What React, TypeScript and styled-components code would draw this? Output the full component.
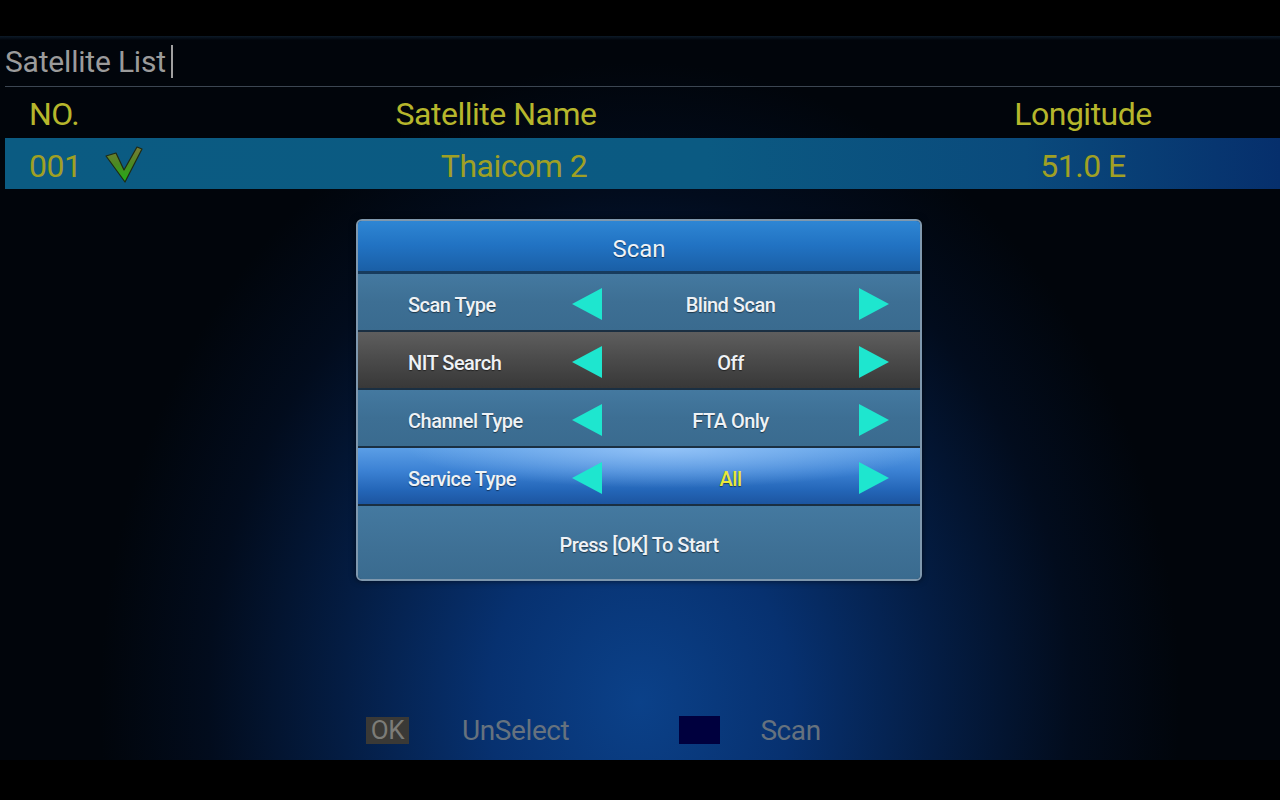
import React from "react";
import styled, { createGlobalStyle } from "styled-components";

const GlobalStyle = createGlobalStyle`
  html, body {
    margin: 0;
    padding: 0;
    background: #000;
  }
  * {
    box-sizing: border-box;
  }
`;

const Screen = styled.div`
  width: 1280px;
  height: 800px;
  display: flex;
  flex-direction: column;
  background: #000;
  font-family: Roboto, "Liberation Sans", sans-serif;
  overflow: hidden;
`;

const Letterbox = styled.div<{ $h: number }>`
  height: ${(p) => p.$h}px;
  flex: none;
  background: #000;
`;

const Stage = styled.div`
  position: relative;
  flex: 1;
  display: flex;
  flex-direction: column;
  background:
    linear-gradient(180deg, rgba(20, 40, 60, 0.6) 0px, rgba(0, 0, 0, 0) 4px),
    radial-gradient(
      ellipse 540px 640px at 50% 92%,
      #0b4189 0%,
      #073170 28%,
      #041d44 55%,
      #020c1d 80%,
      #01050b 100%
    );
  background-color: #01050b;
`;

const TitleRow = styled.div`
  height: 51px;
  margin-left: 5px;
  display: flex;
  align-items: center;
  border-bottom: 1px solid #3c4652;
  color: #9b9b9b;
  font-size: 30px;
  letter-spacing: -0.2px;
  padding-top: 1px;
`;

const Cursor = styled.span`
  width: 2px;
  height: 33px;
  margin-left: 5px;
  background: #a0a0a0;
`;

const ListRow = styled.div<{ $selected?: boolean }>`
  height: 51px;
  margin-left: 5px;
  display: grid;
  grid-template-columns: 195px 592px 94px 1fr;
  align-items: center;
  font-size: 32px;
  letter-spacing: -0.5px;
  padding-top: ${(p) => (p.$selected ? 4 : 3)}px;
  color: ${(p) => (p.$selected ? "#a0a024" : "#b6b62c")};
  background: ${(p) =>
    p.$selected
      ? "linear-gradient(90deg, #0b5b82 0%, #0b5a82 55%, #0a4a7c 80%, #062f6c 100%)"
      : "transparent"};
`;

const Cell = styled.div<{ $align?: "left" | "center"; $shift?: number }>`
  display: flex;
  align-items: center;
  justify-content: ${(p) => (p.$align === "left" ? "flex-start" : "center")};
  padding-left: ${(p) => (p.$align === "left" ? 24 : p.$shift ?? 0)}px;
  gap: 24px;
  white-space: nowrap;
`;

const Check = () => (
  <svg width="38" height="38" viewBox="0 0 38 38" style={{ marginTop: -4 }}>
    <defs>
      <linearGradient id="chk" x1="0" y1="0" x2="0" y2="1">
        <stop offset="0" stopColor="#7a7a36" />
        <stop offset="0.5" stopColor="#4a8a22" />
        <stop offset="1" stopColor="#1fb016" />
      </linearGradient>
    </defs>
    <path
      d="M1 11 L11 8 L19 25 L32 2 L37 4 L20 37 Z"
      fill="url(#chk)"
      stroke="#202a14"
      strokeWidth="1.2"
      strokeLinejoin="round"
    />
  </svg>
);

const Dialog = styled.div`
  position: absolute;
  left: 356px;
  top: 183px;
  width: 566px;
  height: 362px;
  display: flex;
  flex-direction: column;
  border: 2px solid #7f98ae;
  border-radius: 6px;
  background: #1d3a52;
  overflow: hidden;
  box-shadow: 0 0 6px rgba(0, 0, 0, 0.6);
  color: #eef2f6;
  text-shadow: 0 1px 1px rgba(0, 0, 0, 0.5);
`;

const DialogHeader = styled.div`
  height: 53px;
  flex: none;
  display: flex;
  align-items: center;
  justify-content: center;
  padding-top: 6px;
  font-size: 24px;
  background: linear-gradient(180deg, #2e86d4 0%, #2172c2 50%, #1a5fa6 100%);
  border-bottom: 3px solid #173c5e;
`;

type Tone = "normal" | "muted" | "active";

const rowBackground: Record<Tone, string> = {
  normal: "linear-gradient(180deg, #4479a0 0%, #3d6f94 50%, #3a6b8f 100%)",
  muted: "linear-gradient(180deg, #5e5e5e 0%, #4a4a4a 50%, #383838 100%)",
  active:
    "radial-gradient(ellipse 260px 40px at 55% 0%, rgba(170, 210, 255, 0.7) 0%, rgba(170, 210, 255, 0) 100%), linear-gradient(180deg, #5b9ee6 0%, #3c82d4 40%, #2466b8 75%, #1c55a0 100%)",
};

const OptionRow = styled.div<{ $tone: Tone }>`
  height: 58px;
  flex: none;
  display: grid;
  grid-template-columns: 50px 163px 32px 255px 32px 1fr;
  align-items: center;
  font-size: 20px;
  font-weight: 500;
  letter-spacing: -0.5px;
  background: ${(p) => rowBackground[p.$tone]};
  border-bottom: 2px solid #1a2f42;
`;

const OptionLabel = styled.div`
  grid-column: 2;
  white-space: nowrap;
  padding-top: 6px;
`;

const OptionValue = styled.div<{ $highlight?: boolean }>`
  text-align: center;
  padding-top: 6px;
  color: ${(p) => (p.$highlight ? "#e9e93a" : "#eef2f6")};
`;

const Arrow = ({ dir }: { dir: "left" | "right" }) => (
  <svg width="32" height="34" viewBox="0 0 32 34" style={{ marginTop: 4 }}>
    <polygon
      points={dir === "left" ? "31,1 31,33 1,17" : "1,1 1,33 31,17"}
      fill="#1ee6cf"
    />
  </svg>
);

const StartRow = styled.div`
  flex: 1;
  display: flex;
  align-items: center;
  justify-content: center;
  font-size: 20px;
  font-weight: 500;
  letter-spacing: -0.5px;
  padding-top: 4px;
  background: linear-gradient(180deg, #4479a0 0%, #3e7095 60%, #3a6b8f 100%);
`;

const Footer = styled.div`
  margin-top: auto;
  height: 60px;
  display: flex;
  align-items: center;
  padding-left: 366px;
  font-size: 28px;
  letter-spacing: -0.4px;
`;

const KeyBox = styled.div<{ $color: string; $w: number; $h: number }>`
  width: ${(p) => p.$w}px;
  height: ${(p) => p.$h}px;
  display: flex;
  align-items: center;
  justify-content: center;
  background: ${(p) => p.$color};
  color: #7c7c78;
  font-size: 26px;
`;

const KeyLabel = styled.div<{ $gap: number; $after: number }>`
  margin-left: ${(p) => p.$gap}px;
  margin-right: ${(p) => p.$after}px;
  color: #66727e;
`;

const options: { label: string; value: string; tone: Tone }[] = [
  { label: "Scan Type", value: "Blind Scan", tone: "normal" },
  { label: "NIT Search", value: "Off", tone: "muted" },
  { label: "Channel Type", value: "FTA Only", tone: "normal" },
  { label: "Service Type", value: "All", tone: "active" },
];

export default function App() {
  return (
    <>
      <GlobalStyle />
      <Screen>
        <Letterbox $h={36} />
        <Stage>
          <TitleRow>
            Satellite List
            <Cursor />
          </TitleRow>

          <ListRow>
            <Cell $align="left">NO.</Cell>
            <Cell>Satellite Name</Cell>
            <div />
            <Cell>Longitude</Cell>
          </ListRow>

          <ListRow $selected>
            <Cell $align="left">
              001
              <Check />
            </Cell>
            <Cell $shift={36}>Thaicom 2</Cell>
            <div />
            <Cell>51.0 E</Cell>
          </ListRow>

          <Dialog>
            <DialogHeader>Scan</DialogHeader>
            {options.map((o) => (
              <OptionRow key={o.label} $tone={o.tone}>
                <OptionLabel>{o.label}</OptionLabel>
                <Arrow dir="left" />
                <OptionValue $highlight={o.tone === "active"}>
                  {o.value}
                </OptionValue>
                <Arrow dir="right" />
              </OptionRow>
            ))}
            <StartRow>Press [OK] To Start</StartRow>
          </Dialog>

          <Footer>
            <KeyBox $color="#3a3936" $w={43} $h={27}>
              OK
            </KeyBox>
            <KeyLabel $gap={53} $after={110}>
              UnSelect
            </KeyLabel>
            <KeyBox $color="#00003e" $w={41} $h={28} />
            <KeyLabel $gap={40} $after={0}>
              Scan
            </KeyLabel>
          </Footer>
        </Stage>
        <Letterbox $h={40} />
      </Screen>
    </>
  );
}
